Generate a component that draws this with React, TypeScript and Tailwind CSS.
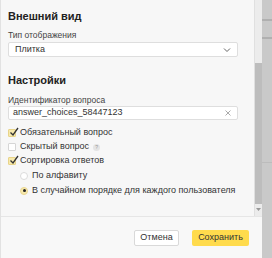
import React from 'react';

const Check: React.FC<{ checked?: boolean; label: string; help?: boolean }> = ({ checked, label, help }) => (
  <div className="flex items-center h-[14px]">
    <span
      className={`relative w-[8px] h-[8px] rounded-[1px] border ${
        checked ? 'bg-[#f7e9ac] border-[#e8d48a]' : 'bg-white border-[#d6d6d6]'
      }`}
    >
      {checked && (
        <svg className="absolute left-[0px] top-[-3px]" width="10" height="10" viewBox="0 0 10 10">
          <path d="M1.5 5.5 L4 8 L9 1" fill="none" stroke="#333" strokeWidth="1.3" />
        </svg>
      )}
    </span>
    <span className="ml-[4px] text-[9px] text-[#333] whitespace-nowrap">{label}</span>
    {help && (
      <span className="ml-[4px] w-[7px] h-[7px] rounded-full bg-[#e4e4e4] text-[5px] leading-[7px] text-center text-[#999]">?</span>
    )}
  </div>
);

const Radio: React.FC<{ checked?: boolean; label: string }> = ({ checked, label }) => (
  <div className="flex items-center h-[15px] pl-[12px]">
    <span
      className={`flex items-center justify-center w-[8px] h-[8px] rounded-full border ${
        checked ? 'bg-[#f7e9ac] border-[#ead690]' : 'bg-white border-[#dcdcdc]'
      }`}
    >
      {checked && <span className="w-[3px] h-[3px] rounded-full bg-[#222]" />}
    </span>
    <span className="ml-[4px] text-[9px] text-[#333] whitespace-nowrap">{label}</span>
  </div>
);

export default function App() {
  return (
    <div
      className="w-[272px] h-[258px] flex bg-[#c9c9c9] overflow-hidden"
      style={{ fontFamily: '"Liberation Sans", Arial, sans-serif' }}
    >
      <div className="w-[262px] h-full flex flex-col bg-[#f7f7f7] border-l border-[#e2e2e2]">
        <div className="flex flex-1 min-h-0">
          <div className="flex-1 pl-[7px] pr-[16px]">
            <div className="pt-[8px] text-[11px] font-bold text-[#222] leading-[16px]">Внешний вид</div>
            <div className="mt-[5px] text-[8.5px] text-[#444] leading-[12px]">Тип отображения</div>
            <div className="mt-[1px] h-[15px] flex items-center justify-between bg-white border border-[#dedede] rounded-[2px] px-[6px]">
              <span className="text-[9px] text-[#333]">Плитка</span>
              <svg width="8" height="6" viewBox="0 0 8 6">
                <path d="M1 1.5 L4 4.5 L7 1.5" fill="none" stroke="#666" strokeWidth="1" />
              </svg>
            </div>
            <div className="mt-[15px] text-[11px] font-bold text-[#222] leading-[16px]">Настройки</div>
            <div className="mt-[6px] text-[8.5px] text-[#444] leading-[12px]">Идентификатор вопроса</div>
            <div className="h-[14px] flex items-center justify-between bg-white border border-[#dedede] rounded-[2px] pl-[4px] pr-[6px]">
              <span className="text-[9px] text-[#333]">answer_choices_58447123</span>
              <svg width="6" height="6" viewBox="0 0 6 6">
                <path d="M0.5 0.5 L5.5 5.5 M5.5 0.5 L0.5 5.5" stroke="#aaa" strokeWidth="1" />
              </svg>
            </div>
            <div className="mt-[6px] flex flex-col">
              <Check checked label="Обязательный вопрос" />
              <Check label="Скрытый вопрос" help />
              <Check checked label="Сортировка ответов" />
              <Radio label="По алфавиту" />
              <Radio checked label="В случайном порядке для каждого пользователя" />
            </div>
          </div>
          <div className="w-[8px] flex flex-col bg-[#ececec] border-l border-[#e0e0e0]">
            <div className="h-[63px]" />
            <div className="flex-1 bg-[#bdbdbd]" />
            <div className="h-[12px] flex items-center justify-center">
              <svg width="5" height="4" viewBox="0 0 5 4">
                <path d="M0 0 L5 0 L2.5 3 Z" fill="#999" />
              </svg>
            </div>
          </div>
        </div>
        <div className="h-[42px] flex items-center justify-end gap-[13px] pr-[13px] border-t border-[#e6e6e6] bg-[#f8f8f8]">
          <button className="w-[45px] h-[16px] bg-white border border-[#d9d9d9] rounded-[2px] text-[9px] text-[#333]">Отмена</button>
          <button className="w-[57px] h-[16px] bg-[#ffdb4d] rounded-[2px] text-[9px] text-[#333]">Сохранить</button>
        </div>
      </div>
      <div className="flex-1 flex flex-col">
        <div className="h-[19px]" />
        <div className="h-[2px] bg-[#b0b0b0]" />
        <div className="h-[16px]" />
        <div className="h-[2px] bg-[#b0b0b0]" />
        <div className="h-[123px]" />
        <div className="h-[1px] bg-[#bcbcbc]" />
      </div>
    </div>
  );
}
